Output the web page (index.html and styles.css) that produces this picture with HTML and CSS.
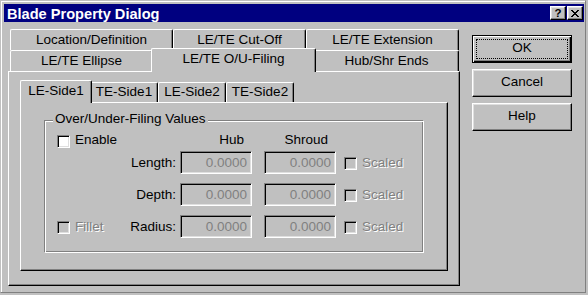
FILE: index.html
```html
<!DOCTYPE html>
<html lang="en">
<head>
<meta charset="utf-8">
<title>Blade Property Dialog</title>
<link rel="stylesheet" href="styles.css">
</head>
<body>
<div class="window">
  <div class="titlebar">
    <span class="title">Blade Property Dialog</span>
    <div class="caption-btns">
      <div class="cap-btn"><span class="q">?</span></div>
      <div class="cap-btn"><svg class="x" width="8" height="7" viewBox="0 0 8 7"><path d="M0 0h2v1h-2z M6 0h2v1h-2z M1 1h2v1h-2z M5 1h2v1h-2z M2 2h4v1h-4z M3 3h2v1h-2z M2 4h4v1h-4z M1 5h2v1h-2z M5 5h2v1h-2z M0 6h2v1h-2z M6 6h2v1h-2z" fill="#000"/></svg></div>
    </div>
  </div>
  <div class="content">
    <div class="outer-tabs">
      <div class="tabrow">
        <div class="tab t-loc">Location/Definition</div>
        <div class="tab t-cut">LE/TE Cut-Off</div>
        <div class="tab t-ext">LE/TE Extension</div>
      </div>
      <div class="tabrow">
        <div class="tab t-ell">LE/TE Ellipse</div>
        <div class="tab t-ouf sel">LE/TE O/U-Filing</div>
        <div class="tab t-hub">Hub/Shr Ends</div>
      </div>
      <div class="panel outer-panel">
        <div class="inner-tabs">
          <div class="tabrow inner-row">
            <div class="tab itab sel">LE-Side1</div>
            <div class="tab itab">TE-Side1</div>
            <div class="tab itab">LE-Side2</div>
            <div class="tab itab">TE-Side2</div>
          </div>
          <div class="panel inner-panel">
            <div class="group">
              <span class="legend">Over/Under-Filing Values</span>
              <div class="grid">
                <div class="check head-check"><span class="cb"></span><span>Enable</span></div>
                <span></span>
                <span class="colhead hub">Hub</span>
                <span class="colhead shroud">Shroud</span>
                <span></span>

                <span></span>
                <span class="lbl">Length:</span>
                <div class="field">0.0000</div>
                <div class="field">0.0000</div>
                <div class="check row-check disabled"><span class="cb"></span><span class="dis">Scaled</span></div>

                <span></span>
                <span class="lbl">Depth:</span>
                <div class="field">0.0000</div>
                <div class="field">0.0000</div>
                <div class="check row-check disabled"><span class="cb"></span><span class="dis">Scaled</span></div>

                <div class="check row-check disabled"><span class="cb"></span><span class="dis">Fillet</span></div>
                <span class="lbl">Radius:</span>
                <div class="field">0.0000</div>
                <div class="field">0.0000</div>
                <div class="check row-check disabled"><span class="cb"></span><span class="dis">Scaled</span></div>
              </div>
            </div>
          </div>
        </div>
      </div>
    </div>
    <div class="btns">
      <button class="btn default">OK</button>
      <button class="btn">Cancel</button>
      <button class="btn">Help</button>
    </div>
  </div>
</div>
</body>
</html>
```

FILE: styles.css
```css
* { box-sizing: border-box; }
html, body { margin: 0; padding: 0; }
body {
  width: 588px;
  height: 295px;
  overflow: hidden;
  background: #c0c0c0;
  font-family: "Liberation Sans", Arial, sans-serif;
  font-size: 13.5px;
  line-height: 16px;
  color: #000;
}

.window {
  width: 586px;
  height: 293px;
  border: 1px solid;
  border-color: #c0c0c0 #808080 #808080 #c0c0c0;
  box-shadow: inset 1px 1px 0 #fff;
  padding: 3px 1px 1px 3px;
  display: flex;
  flex-direction: column;
}

/* Title bar */
.titlebar {
  height: 18px;
  flex: none;
  background: #000080;
  color: #fff;
  display: flex;
  justify-content: space-between;
  align-items: flex-start;
  padding-left: 3px;
}
.title {
  font-weight: bold;
  font-size: 14.6px;
  line-height: 16px;
  padding-top: 2px;
  white-space: nowrap;
}
.caption-btns {
  display: flex;
  gap: 1px;
  padding: 2px 1px 0 0;
}
.cap-btn {
  width: 16px;
  height: 14px;
  background: #c0c0c0;
  border: 1px solid;
  border-color: #fff #000 #000 #fff;
  box-shadow: inset -1px -1px 0 #808080, inset 1px 1px 0 #dfdfdf;
  display: flex;
  align-items: center;
  justify-content: center;
  color: #000;
}
.q {
  font-weight: bold;
  font-size: 11.5px;
  line-height: 12px;
  margin-top: 0;
}
.x { display: block; margin-left: 0; }

/* Main content */
.content {
  display: flex;
  align-items: flex-start;
  padding: 7px 0 0 4px;
}
.outer-tabs { width: 452px; flex: none; }

.tabrow {
  display: flex;
  height: 21px;
  padding-left: 2px;
}
.tab {
  flex: none;
  border: 1px solid;
  border-bottom: 0;
  border-color: #fff #000 #000 #fff;
  border-radius: 2px 2px 0 0;
  box-shadow: inset -1px 0 0 #808080;
  background: #c0c0c0;
  text-align: center;
  padding-top: 2px;
  white-space: nowrap;
}
.tab.sel {
  position: relative;
  z-index: 1;
  margin: -2px -2px -1px;
}
.t-loc { width: 163px; }
.t-cut { width: 133px; }
.t-ext { width: 153px; }
.t-ell { width: 143px; }
.t-ouf { width: 165px; }
.t-hub { width: 145px; }

.panel {
  background: #c0c0c0;
  border: 1px solid;
  border-color: #fff #000 #000 #fff;
  box-shadow: inset -1px -1px 0 #808080;
}
.outer-panel {
  height: 215px;
  padding: 10px 0 0 11px;
}
.inner-tabs { width: 428px; }
.inner-row { height: 20px; }
.itab { width: 68px; padding-top: 1px; }
.itab.sel { width: 72px; padding-top: 2px; }

.inner-panel {
  height: 169px;
  padding: 17px 0 0 23px;
}

/* Group box */
.group {
  position: relative;
  width: 380px;
  height: 133px;
  border: 1px solid;
  border-color: #808080 #fff #fff #808080;
  box-shadow: inset 1px 1px 0 #fff, inset -1px -1px 0 #808080;
  padding: 11px 0 0 12px;
}
.legend {
  position: absolute;
  top: -10px;
  left: 8px;
  padding: 0 2px;
  background: #c0c0c0;
  white-space: nowrap;
}

.grid {
  display: grid;
  grid-template-columns: 63px 60px 84px 80px 1fr;
  grid-template-rows: 19px 32px 32px 23px;
  align-items: start;
}
.check {
  display: flex;
  align-items: flex-start;
  gap: 5px;
  white-space: nowrap;
}
.cb {
  flex: none;
  width: 13px;
  height: 13px;
  background: #fff;
  border: 1px solid;
  border-color: #808080 #fff #fff #808080;
  box-shadow: inset 1px 1px 0 #000, inset -1px -1px 0 #dfdfdf;
}
.head-check .cb { margin-top: 3px; }
.row-check { line-height: 23px; }
.row-check .cb { margin-top: 6px; }
.check.disabled .cb { background: #c0c0c0; }
.dis {
  color: #808080;
  text-shadow: 1px 1px 0 #fff;
}
.colhead { text-align: right; }
.colhead.hub { padding-right: 20px; }
.colhead.shroud { padding-right: 16px; }
.lbl {
  text-align: right;
  padding-right: 4px;
  line-height: 23px;
  white-space: nowrap;
}
.field {
  width: 72px;
  height: 23px;
  background: #c0c0c0;
  border: 1px solid;
  border-color: #808080 #fff #fff #808080;
  box-shadow: inset 1px 1px 0 #000, inset -1px -1px 0 #dfdfdf;
  color: #808080;
  text-align: right;
  padding-right: 4px;
  line-height: 21px;
}

/* Buttons */
.btns {
  display: flex;
  flex-direction: column;
  gap: 6px;
  margin: 6px 0 0 12px;
}
.btn {
  width: 100px;
  height: 28px;
  padding: 0 0 2px;
  font: inherit;
  color: #000;
  background: #c0c0c0;
  border: 1px solid;
  border-color: #fff #000 #000 #fff;
  box-shadow: inset -1px -1px 0 #808080, inset 1px 1px 0 #dfdfdf;
  border-radius: 0;
}
.btn.default {
  position: relative;
  border-color: #000;
  box-shadow: inset 1px 1px 0 #fff, inset -1px -1px 0 #000, inset -2px -2px 0 #808080;
}
.btn.default::after {
  content: "";
  position: absolute;
  inset: 3px;
  border: 1px dotted #000;
}
```
